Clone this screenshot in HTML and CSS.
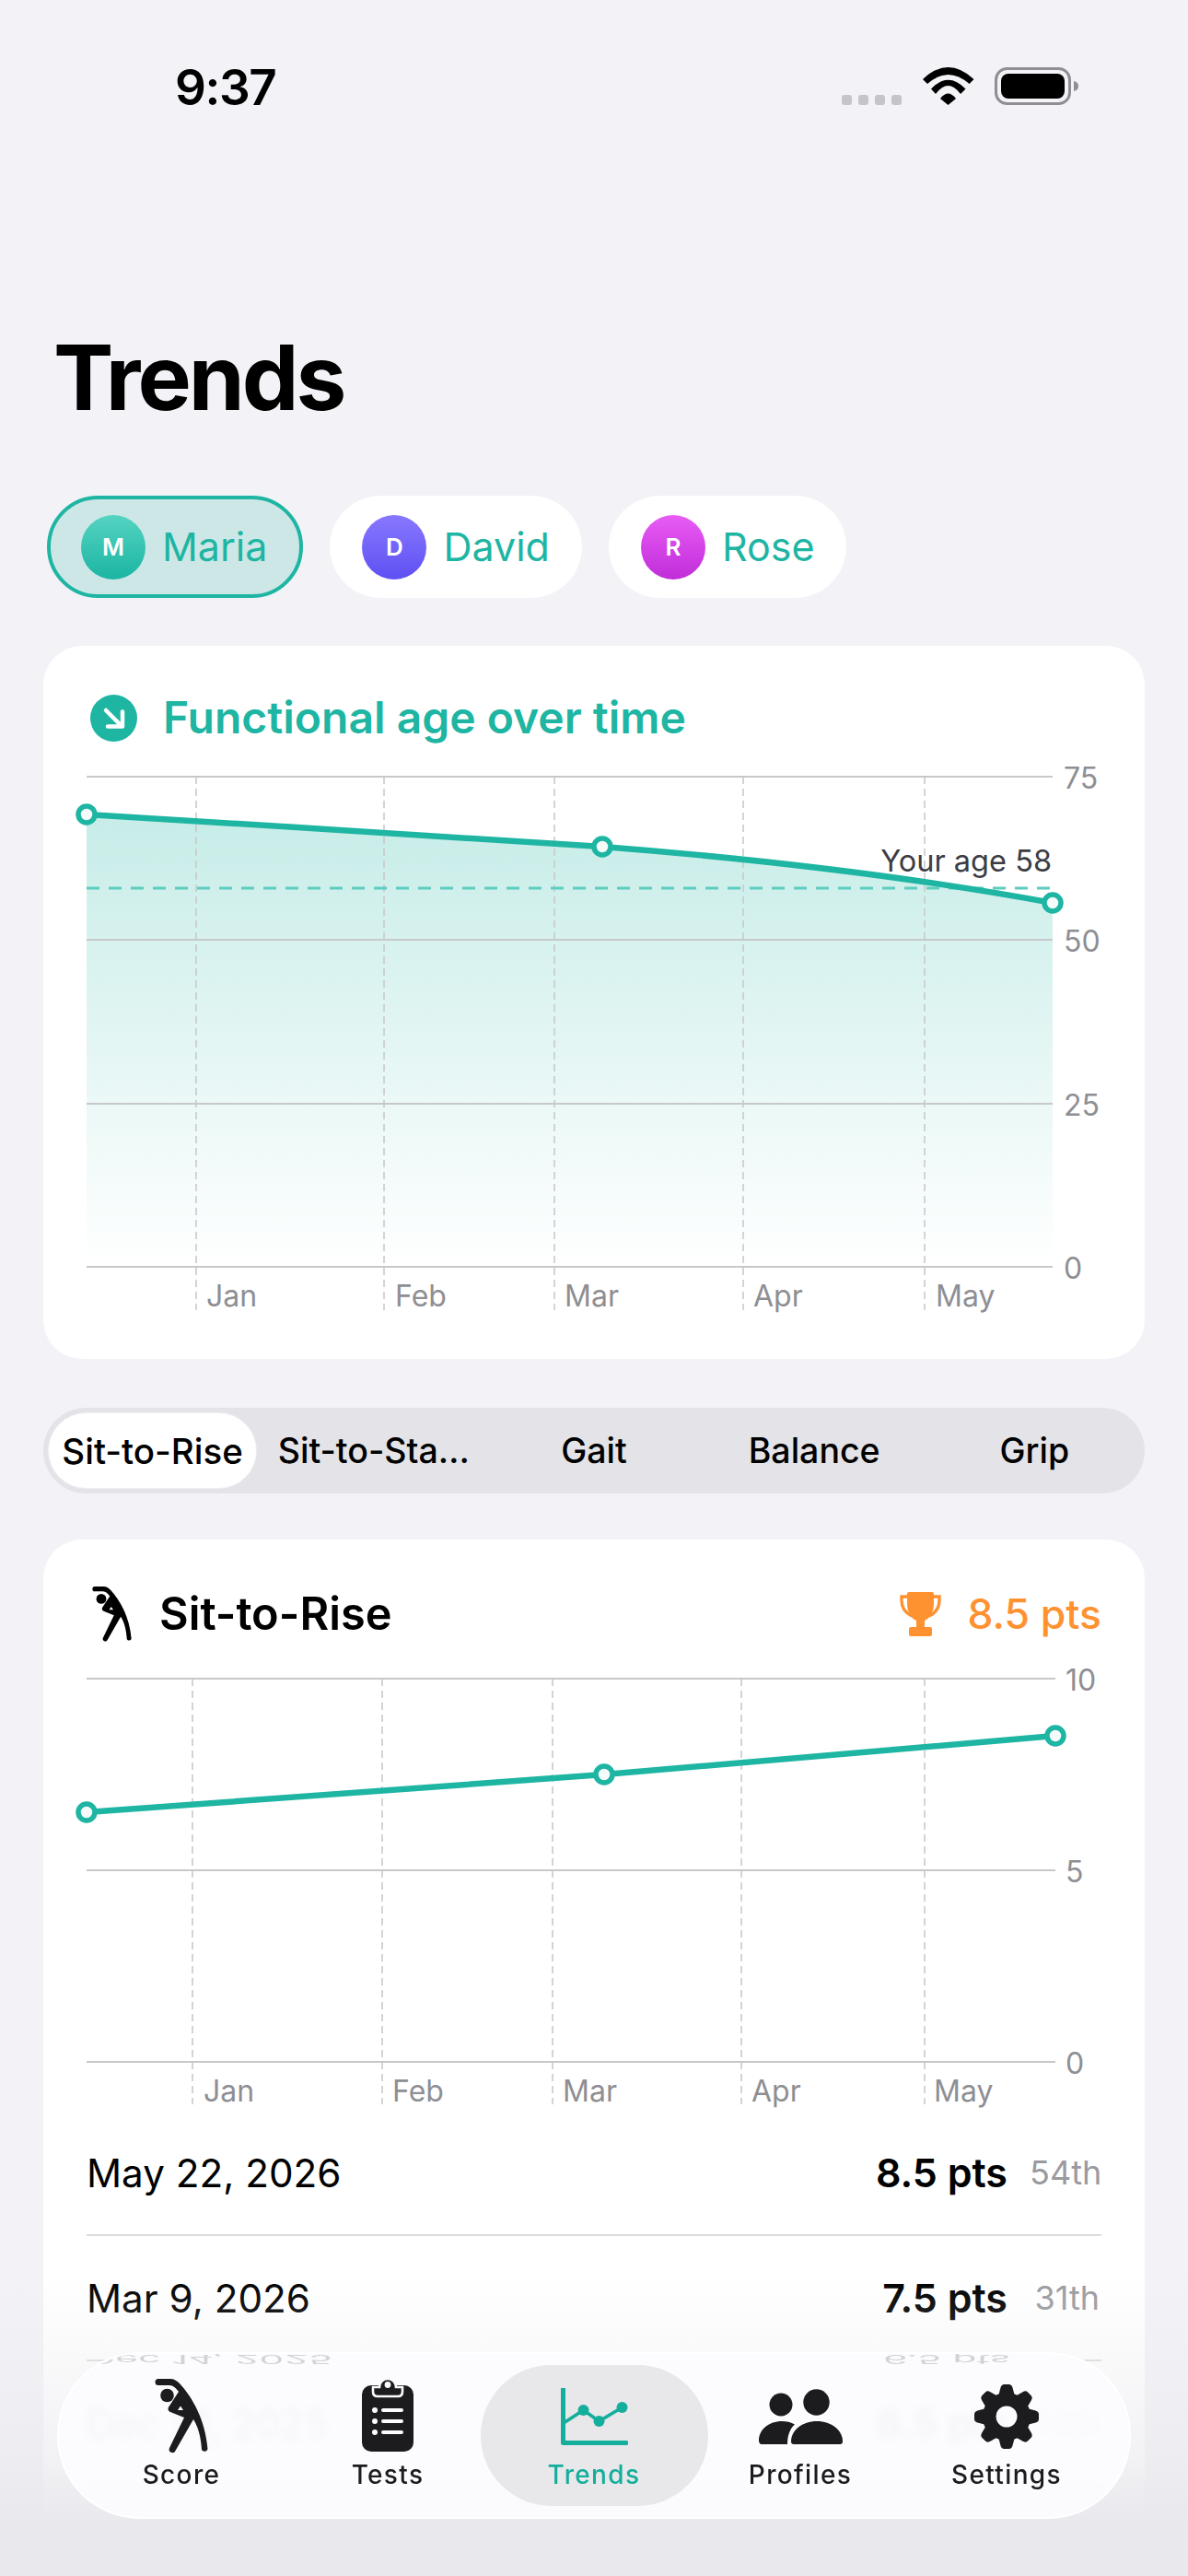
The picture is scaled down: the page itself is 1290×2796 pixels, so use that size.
FILE: index.html
```html
<!DOCTYPE html>
<html lang="en">
<head>
<meta charset="utf-8">
<title>Trends</title>
<link rel="stylesheet" href="styles.css">
</head>
<body>
<div class="phone">
  <div class="statusbar">
    <div class="time">9:37</div>
    <div class="status-icons">
      <div class="signal"><i></i><i></i><i></i><i></i></div>
      <svg class="wifi" width="56" height="41" viewBox="0 0 56 41"><path d="M0 13Q27.5-13 55.5 13L50.5 18Q27.5-2 5 18Z"/><path d="M9 23.5Q27.5 4 46.5 23.5L41 29Q27.5 11 14 29Z"/><path d="M19 34Q27.5 23 36 34L27.5 41Z"/></svg>
      <svg class="battery" width="91" height="41" viewBox="0 0 91 41"><rect x="1.5" y="1.5" width="80" height="38" rx="12" fill="none" stroke="#8e8e93" stroke-width="3"/><rect x="7" y="7" width="69" height="27" rx="8"/><path d="M86 15c3 .5 5 2.500 5 5.500s-2 5-5 5.500z" fill="#8e8e93"/></svg>
    </div>
  </div>

  <main class="content">
    <h1 class="title">Trends</h1>

    <div class="pills">
      <div class="pill pill-active"><span class="avatar avatar-teal">M</span><span class="pill-name">Maria</span></div>
      <div class="pill"><span class="avatar avatar-violet">D</span><span class="pill-name">David</span></div>
      <div class="pill"><span class="avatar avatar-pink">R</span><span class="pill-name">Rose</span></div>
    </div>

    <section class="card card-age">
      <header class="age-head">
        <span class="age-icon"><svg width="51" height="51" viewBox="0 0 51 51"><path d="M17 17L33 33M19 34.500H35V18.500" fill="none" stroke="#fff" stroke-width="4.500" stroke-linecap="round" stroke-linejoin="round"/></svg></span>
        <h2 class="age-title">Functional age over time</h2>
      </header>
      <svg class="chart chart-age" width="1196" height="655" viewBox="47 820 1196 655">
        <defs><linearGradient id="area" x1="0" y1="884" x2="0" y2="1375" gradientUnits="userSpaceOnUse"><stop offset="0" stop-color="#1eb5a3" stop-opacity=".25"/><stop offset="1" stop-color="#1eb5a3" stop-opacity="0"/></linearGradient></defs>
        <path d="M94 884C280 896 470 906 654 919C820 932 980 950 1143 980V1375H94Z" fill="url(#area)"/>
        <g class="grid"><path d="M94 843H1143M94 1020H1143M94 1198H1143M94 1375H1143"/></g>
        <g class="vgrid"><path d="M213 843V1422M417 843V1422M602 843V1422M807 843V1422M1004 843V1422"/></g>
        <path class="age-line" d="M94 964H1143"/>
        <path class="trend" d="M94 884C280 896 470 906 654 919C820 932 980 950 1143 980"/>
        <circle class="dot" cx="94" cy="884" r="9"/><circle class="dot" cx="654" cy="919" r="9"/><circle class="dot" cx="1143" cy="980" r="9"/>
        <text class="age-label" x="1142" y="934" text-anchor="end">Your age 58</text>
        <text class="tick" x="1155" y="844">75</text><text class="tick" x="1155" y="1021">50</text><text class="tick" x="1155" y="1199">25</text><text class="tick" x="1155" y="1376">0</text>
        <text class="tick" x="224" y="1406">Jan</text><text class="tick" x="429" y="1406">Feb</text><text class="tick" x="613" y="1406">Mar</text><text class="tick" x="818" y="1406">Apr</text><text class="tick" x="1016" y="1406">May</text>
      </svg>
    </section>

    <nav class="segments">
      <div class="segment segment-active">Sit-to-Rise</div>
      <div class="segment">Sit-to-Sta…</div>
      <div class="segment">Gait</div>
      <div class="segment">Balance</div>
      <div class="segment">Grip</div>
    </nav>

    <section class="card card-test">
      <header class="test-head">
        <svg class="test-icon" width="43" height="61" viewBox="0 0 58 82"><path fill-rule="evenodd" d="M4 0H17C21 0 24 2 27 5C41 20 55 45 57.500 76A3.500 3.500 0 0 1 51 77C50 62 47 52 42 44L22.500 78A3.500 3.500 0 0 1 16 75L32 42L17 36C14 34.500 14 32 15.500 30L26 14C23 10 20 7 16 7H4A3.500 3.500 0 0 1 4 0ZM25 34H31L28 29.500Z"/><circle cx="13.500" cy="18" r="7.300"/></svg>
        <h2 class="test-title">Sit-to-Rise</h2>
        <div class="test-score">
          <svg width="45" height="48" viewBox="0 0 45 48"><path d="M10 0H35Q37 0 37 2V12C37 23 32 29 27 31V38H33Q35 38 35 40V46Q35 48 33 48H12Q10 48 10 46V40Q10 38 12 38H18V31C13 29 8 23 8 12V2Q8 0 10 0Z"/><path d="M8 5H2V9C2 18 7 23 13 26M37 5H43V9C43 18 38 23 32 26" fill="none" stroke="#ff9230" stroke-width="3.400"/></svg>
          <span>8.5 pts</span>
        </div>
      </header>
      <svg class="chart chart-test" width="1196" height="491" viewBox="47 1800 1196 491">
        <g class="grid"><path d="M94 1822H1146M94 2030H1146M94 2238H1146"/></g>
        <g class="vgrid"><path d="M209 1822V2284M415 1822V2284M600 1822V2284M805 1822V2284M1004 1822V2284"/></g>
        <path class="trend" d="M94 1967L656 1926L1146 1884"/>
        <circle class="dot" cx="94" cy="1967" r="9"/><circle class="dot" cx="656" cy="1926" r="9"/><circle class="dot" cx="1146" cy="1884" r="9"/>
        <text class="tick" x="1157" y="1823">10</text><text class="tick" x="1157" y="2031">5</text><text class="tick" x="1157" y="2239">0</text>
        <text class="tick" x="221" y="2269">Jan</text><text class="tick" x="426" y="2269">Feb</text><text class="tick" x="611" y="2269">Mar</text><text class="tick" x="816" y="2269">Apr</text><text class="tick" x="1014" y="2269">May</text>
      </svg>
      <div class="rows">
        <div class="row"><span class="row-date">May 22, 2026</span><span class="row-val"><b>8.5 pts</b><small>54th</small></span></div>
        <div class="row"><span class="row-date">Mar 9, 2026</span><span class="row-val"><b>7.5 pts</b><small>31th</small></span></div>
        <div class="row"><span class="row-date">Dec 14, 2025</span><span class="row-val"><b>6.5 pts</b><small>14th</small></span></div>
        <div class="row"><span class="row-date">Oct 14, 2025</span><span class="row-val"><b>6.0 pts</b><small>10th</small></span></div>
      </div>
    </section>
  </main>

  <div class="fade"></div>

  <nav class="tabbar">
    <div class="reflect" aria-hidden="true"><span>Dec 14, 2025</span><span>6.5 pts</span></div>
    <div class="tab">
      <span class="tab-icon"><svg width="58" height="82" viewBox="0 0 58 82"><path fill-rule="evenodd" d="M4 0H17C21 0 24 2 27 5C41 20 55 45 57.500 76A3.500 3.500 0 0 1 51 77C50 62 47 52 42 44L22.500 78A3.500 3.500 0 0 1 16 75L32 42L17 36C14 34.500 14 32 15.500 30L26 14C23 10 20 7 16 7H4A3.500 3.500 0 0 1 4 0ZM25 34H31L28 29.500Z"/><circle cx="13.500" cy="18" r="7.300"/></svg></span>
      <span class="tab-label">Score</span>
    </div>
    <div class="tab">
      <span class="tab-icon"><svg width="56" height="84" viewBox="0 0 56 84"><rect y="8" width="56" height="72" rx="10"/><path d="M12 10H19A9 9 0 0 1 37 10H44V15Q44 20 39 20H17Q12 20 12 15Z" stroke="#fbfbfd" stroke-width="2.600"/><circle cx="28" cy="7.500" r="3.400" fill="#fbfbfd"/><g fill="#fbfbfd"><circle cx="14" cy="35" r="3"/><circle cx="14" cy="47" r="3"/><circle cx="14" cy="59" r="3"/><rect x="21" y="33" width="24" height="4" rx="2"/><rect x="21" y="45" width="24" height="4" rx="2"/><rect x="21" y="57" width="24" height="4" rx="2"/></g></svg></span>
      <span class="tab-label">Tests</span>
    </div>
    <div class="tab tab-active">
      <span class="tab-icon"><svg width="73" height="62" viewBox="0 0 73 62"><path d="M2.500 0V59.500H71" fill="none" stroke="#14ae9c" stroke-width="5" stroke-linecap="round" stroke-linejoin="round"/><path d="M3 38L24.500 24L41.500 36L66.500 21" fill="none" stroke="#14ae9c" stroke-width="3.600"/><circle cx="24.500" cy="24" r="6"/><circle cx="41.500" cy="36" r="6"/><circle cx="66.500" cy="21" r="6"/></svg></span>
      <span class="tab-label">Trends</span>
    </div>
    <div class="tab">
      <span class="tab-icon"><svg width="92" height="60" viewBox="0 0 92 60"><circle cx="25" cy="17" r="12.500"/><circle cx="63.500" cy="14.500" r="14.200"/><path d="M1 56C1 44 12 35 26 35C31 35 36 36 40 38.500C35 43 32 50 32 60H4C2 60 1 58 1 56Z"/><path d="M36 57C36 45 48 35 64 35C80 35 92 45 92 57C92 59 91 60 89 60H39C37 60 36 59 36 57Z"/></svg></span>
      <span class="tab-label">Profiles</span>
    </div>
    <div class="tab">
      <span class="tab-icon"><svg width="70" height="70" viewBox="-35 -35 70 70"><defs><path id="tooth" d="M-9-22L-6.500-31.500Q-5.500-35-2.500-35H2.500Q5.500-35 6.500-31.500L9-22Z"/></defs><path fill-rule="evenodd" d="M0-26A26 26 0 1 1 0 26A26 26 0 1 1 0-26ZM0-11.500A11.500 11.500 0 1 0 0 11.500A11.500 11.500 0 1 0 0-11.500Z"/><use href="#tooth"/><use href="#tooth" transform="rotate(45)"/><use href="#tooth" transform="rotate(90)"/><use href="#tooth" transform="rotate(135)"/><use href="#tooth" transform="rotate(180)"/><use href="#tooth" transform="rotate(225)"/><use href="#tooth" transform="rotate(270)"/><use href="#tooth" transform="rotate(315)"/></svg></span>
      <span class="tab-label">Settings</span>
    </div>
  </nav>
</div>
</body>
</html>
```

FILE: styles.css
```css
* { box-sizing: border-box; }
html, body { margin: 0; padding: 0; }
body {
  background: #f2f2f7;
  font-family: Inter, "Noto Sans", sans-serif;
  color: #000;
}
.phone {
  position: relative;
  width: 1290px;
  height: 2796px;
  overflow: hidden;
  background: #f2f2f7;
}

/* status bar */
.statusbar {
  display: flex;
  justify-content: space-between;
  align-items: flex-start;
  height: 350px;
  padding: 64px 119px 0 190px;
}
.time {
  font-size: 53px;
  font-weight: 600;
  line-height: 63px;
  letter-spacing: -1.4px;
}
.status-icons {
  display: flex;
  align-items: flex-end;
  margin-top: 9px;
}
.signal { display: flex; gap: 7px; margin-right: 23px; }
.signal i {
  width: 11px;
  height: 11px;
  border-radius: 3px;
  background: #c4c4c9;
}
.wifi { display: block; margin-right: 22px; }
.battery { display: block; }

/* content */
.content { padding: 0 47px; }
.title {
  margin: 0 0 68px 11px;
  font-size: 98px;
  line-height: 120px;
  font-weight: 700;
  letter-spacing: -3px;
}
.pills { display: flex; gap: 29px; margin-left: 4px; }
.pill {
  display: flex;
  align-items: center;
  gap: 18px;
  height: 111px;
  padding: 0 31px;
  background: #fff;
  border: 4px solid transparent;
  border-radius: 56px;
}
.pill-active {
  padding: 0 35px 0 33px;
  background: #cde7e7;
  border-color: #1eb5a3;
}
.avatar {
  display: flex;
  align-items: center;
  justify-content: center;
  width: 70px;
  height: 70px;
  border-radius: 50%;
  color: #fff;
  font-size: 26px;
  font-weight: 600;
}
.avatar-teal { background: linear-gradient(#55d3c1, #1bb5a3); }
.avatar-violet { background: linear-gradient(#8878ff, #5e50f2); }
.avatar-pink { background: linear-gradient(#e85cf5, #c02dd9); }
.pill-name { font-size: 43px; color: #1eb5a3; line-height: 1; }

.card {
  background: #fff;
  border-radius: 42px;
}
.card-age { margin-top: 52px; height: 774px; }
.age-head {
  display: flex;
  align-items: center;
  gap: 28px;
  height: 119px;
  padding: 37px 0 0 51px;
}
.age-icon {
  display: flex;
  width: 51px;
  height: 51px;
  border-radius: 50%;
  background: #1eb5a3;
}
.age-title {
  margin: 0;
  font-size: 48px;
  font-weight: 600;
  color: #1eb5a3;
  line-height: 1.2;
}
.chart { display: block; }
.grid path { fill: none; stroke: #c8c8cb; stroke-width: 2; }
.vgrid path { fill: none; stroke: #c6c6ca; stroke-width: 1.5; stroke-dasharray: 8 5; }
.age-line { fill: none; stroke: #5ccdbe; stroke-width: 3; stroke-dasharray: 14 10; }
.trend { fill: none; stroke: #1eb5a3; stroke-width: 6.500; }
.dot { fill: #f4fbfa; stroke: #1eb5a3; stroke-width: 5.500; }
.tick {
  font-size: 32px;
  fill: #8e8e93;
  dominant-baseline: central;
}
.age-label {
  font-size: 32.500px;
  fill: #3c3c43;
  dominant-baseline: central;
}

/* segmented */
.segments {
  display: grid;
  grid-template-columns: repeat(5, 1fr);
  height: 93px;
  margin-top: 53px;
  border-radius: 47px;
  background: #e3e3e8;
}
.segment {
  display: flex;
  align-items: center;
  justify-content: center;
  font-size: 37.500px;
  font-weight: 500;
  white-space: nowrap;
}
.segment-active {
  margin: 6px 8px 6px 6px;
  border-radius: 41px;
  background: #fff;
  box-shadow: 0 0 0 1px rgba(255, 255, 255, .5);
  font-size: 38.500px;
}

/* test card */
.card-test { margin-top: 50px; height: 1300px; }
.test-head {
  display: flex;
  align-items: center;
  height: 129px;
  padding: 33px 47px 0 53px;
}
.test-icon { display: block; margin-right: 30px; }
.test-title {
  margin: 0;
  flex: 1;
  font-size: 48.700px;
  font-weight: 600;
  line-height: 1.2;
}
.test-score {
  display: flex;
  align-items: center;
  gap: 28px;
  color: #ff9230;
  font-size: 44.500px;
  font-weight: 500;
}
.test-score svg { display: block; fill: #ff9230; }
.rows { padding: 0 47px; }
.row {
  display: flex;
  justify-content: space-between;
  align-items: center;
  height: 136px;
  border-bottom: 2px solid #dcdcdf;
}
.row-date { font-size: 42.200px; }
.row-val { display: flex; align-items: center; gap: 24px; }
.row-val b { font-size: 43px; font-weight: 600; }
.row-val small { font-size: 36px; color: #9a9a9f; width: 76px; margin-right: 2px; text-align: right; }

/* bottom fade and tab bar */
.fade {
  position: absolute;
  left: 0;
  right: 0;
  top: 2470px;
  bottom: 0;
  background: linear-gradient(rgba(232, 232, 237, 0), rgba(232, 232, 237, .55) 60%, #e8e8ed 84%);
}
.tabbar {
  position: absolute;
  left: 62px;
  top: 2553px;
  display: grid;
  grid-template-columns: repeat(5, 224px);
  justify-content: center;
  width: 1166px;
  height: 181px;
  padding: 12px 0;
  overflow: hidden;
  border: 2px solid rgba(255, 255, 255, .85);
  border-radius: 90px;
  background: rgba(252, 252, 254, .95);
  -webkit-backdrop-filter: blur(4px);
  backdrop-filter: blur(4px);
}
.reflect {
  position: absolute;
  top: -10px;
  left: 30px;
  right: 129px;
  display: flex;
  justify-content: space-between;
  font-size: 43px;
  line-height: 32px;
  color: #000;
  opacity: .16;
  filter: blur(.5px);
  transform: scaleY(-.3);
}
.tab {
  display: flex;
  flex-direction: column;
  align-items: center;
  color: #1c1c1e;
}
.tab-active {
  margin: 0 -11.5px;
  border-radius: 78px;
  background: #e8e8ea;
  color: #14ae9c;
}
.tab-icon {
  display: flex;
  align-items: center;
  justify-content: center;
  height: 84px;
  margin-top: 14px;
}
.tab-icon svg { display: block; fill: currentColor; }
.tab-label {
  margin-top: 1px;
  font-size: 28px;
  font-weight: 500;
  line-height: 40px;
  letter-spacing: 1.350px;
}
```
